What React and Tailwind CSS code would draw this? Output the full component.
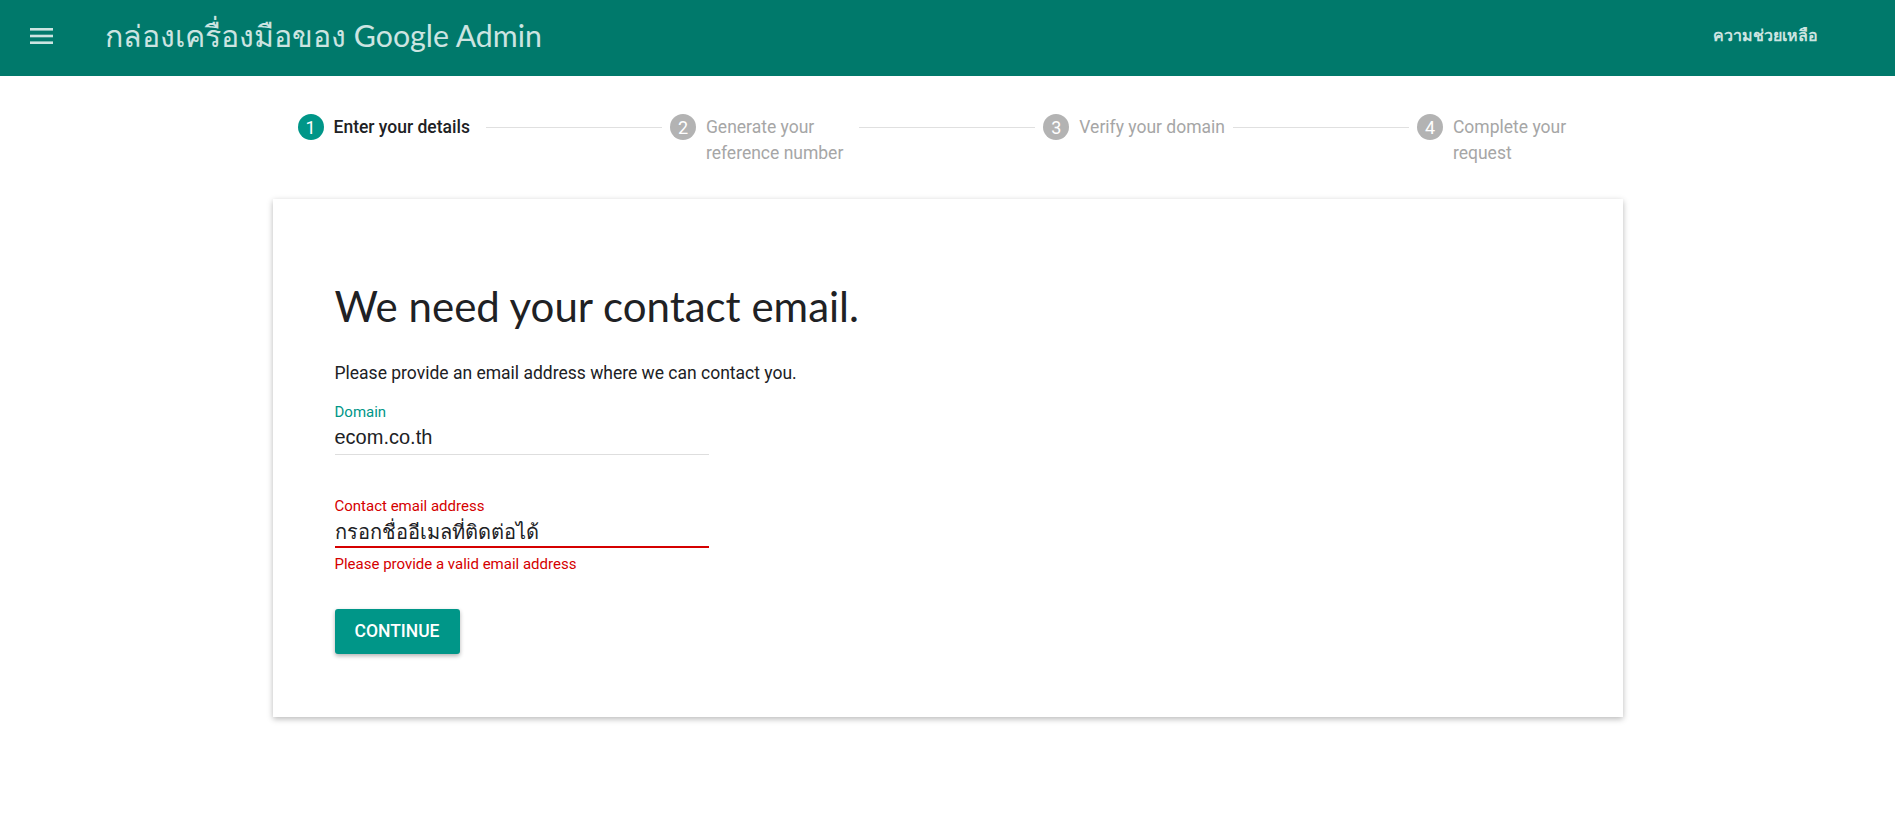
import React from 'react';

// ขั้นตอนด้านบน
const steps = [
  { n: 1, lines: ['Enter your details'], active: true },
  { n: 2, lines: ['Generate your', 'reference number'] },
  { n: 3, lines: ['Verify your domain'] },
  { n: 4, lines: ['Complete your', 'request'] },
];

// ระยะห่างซ้ายของเส้นแต่ละเส้น
const lineMargins = ['ml-4', 'ml-4', 'ml-2'];

function MenuIcon() {
  return (
    <svg width="24" height="16" viewBox="0 0 24 16" className="block">
      <rect x="0" y="0" width="23" height="2.6" fill="currentColor" />
      <rect x="0" y="6.7" width="23" height="2.6" fill="currentColor" />
      <rect x="0" y="13.4" width="23" height="2.6" fill="currentColor" />
    </svg>
  );
}

function Step({ step }) {
  return (
    <div className="flex items-start flex-none">
      <div
        className={
          'w-[26px] h-[26px] rounded-full flex items-center justify-center text-white text-[18px] flex-none ' +
          (step.active ? 'bg-[#009688]' : 'bg-[#b3b3b3]')
        }
      >
        {step.n}
      </div>
      <div
        className={
          'ml-[10px] text-[17.5px] leading-[26px] whitespace-nowrap ' +
          (step.active ? 'text-[#202124] font-medium' : 'text-[#a6a6a6]')
        }
      >
        {step.lines.map((l, i) => (
          <div key={i}>{l}</div>
        ))}
      </div>
    </div>
  );
}

export default function App() {
  return (
    <div className="min-h-screen bg-white font-['Roboto',sans-serif]">
      <header className="h-[76px] bg-[#00796b] flex items-center pb-[5px] text-[#cce4e1]">
        <div className="ml-[30px]">
          <MenuIcon />
        </div>
        <h1 className="ml-[51px] text-[30.3px] leading-none font-['Lato','Noto_Sans',sans-serif]">
          กล่องเครื่องมือของ Google Admin
        </h1>
        <div className="ml-auto mr-[77px] text-[16px] font-bold">ความช่วยเหลือ</div>
      </header>

      <div className="w-[1350px] mx-auto">
        {/* stepper */}
        <div className="flex items-start pt-[38px] pl-[25px]">
          {steps.map((s, i) => (
            <React.Fragment key={s.n}>
              <Step step={s} />
              {i < steps.length - 1 && (
                <div className={'w-[176px] h-px bg-[#e0e0e0] mt-[13px] mr-2 flex-none ' + lineMargins[i]} />
              )}
            </React.Fragment>
          ))}
        </div>

        {/* card */}
        <div className="mt-[33px] bg-white shadow-[0_2px_6px_rgba(0,0,0,0.28)] pl-[62px] pt-[81px] pb-[63px]">
          <h2 className="text-[42px] leading-[52px] text-[#202124] font-['Lato',sans-serif]">
            We need your contact email.
          </h2>
          <p className="mt-[29px] text-[17.5px] leading-[24px] text-[#202124]">
            Please provide an email address where we can contact you.
          </p>

          <div className="mt-[17px] w-[374px]">
            <div className="text-[15px] leading-[20px] text-[#009688]">Domain</div>
            <div className="mt-[3px] pb-[5px] border-b border-[#dedede] text-[20px] leading-[24px] text-[#202124] font-['Liberation_Sans',sans-serif]">
              ecom.co.th
            </div>
          </div>

          <div className="mt-[41px] w-[374px]">
            <div className="text-[15px] leading-[20px] text-[#d50000]">Contact email address</div>
            <div className="mt-[4px] pb-[2px] border-b-2 border-[#d50000] text-[20px] leading-[24px] text-[#202124] font-['Liberation_Sans',sans-serif]">
              กรอกชื่ออีเมลที่ติดต่อได้
            </div>
            <div className="mt-[6px] text-[15px] leading-[20px] text-[#d50000]">
              Please provide a valid email address
            </div>
          </div>

          <button className="mt-[35px] w-[125px] h-[45px] rounded-[3px] bg-[#009688] text-white text-[17.5px] font-medium uppercase shadow-[0_2px_4px_rgba(0,0,0,0.3)]">
            Continue
          </button>
        </div>
      </div>
    </div>
  );
}
